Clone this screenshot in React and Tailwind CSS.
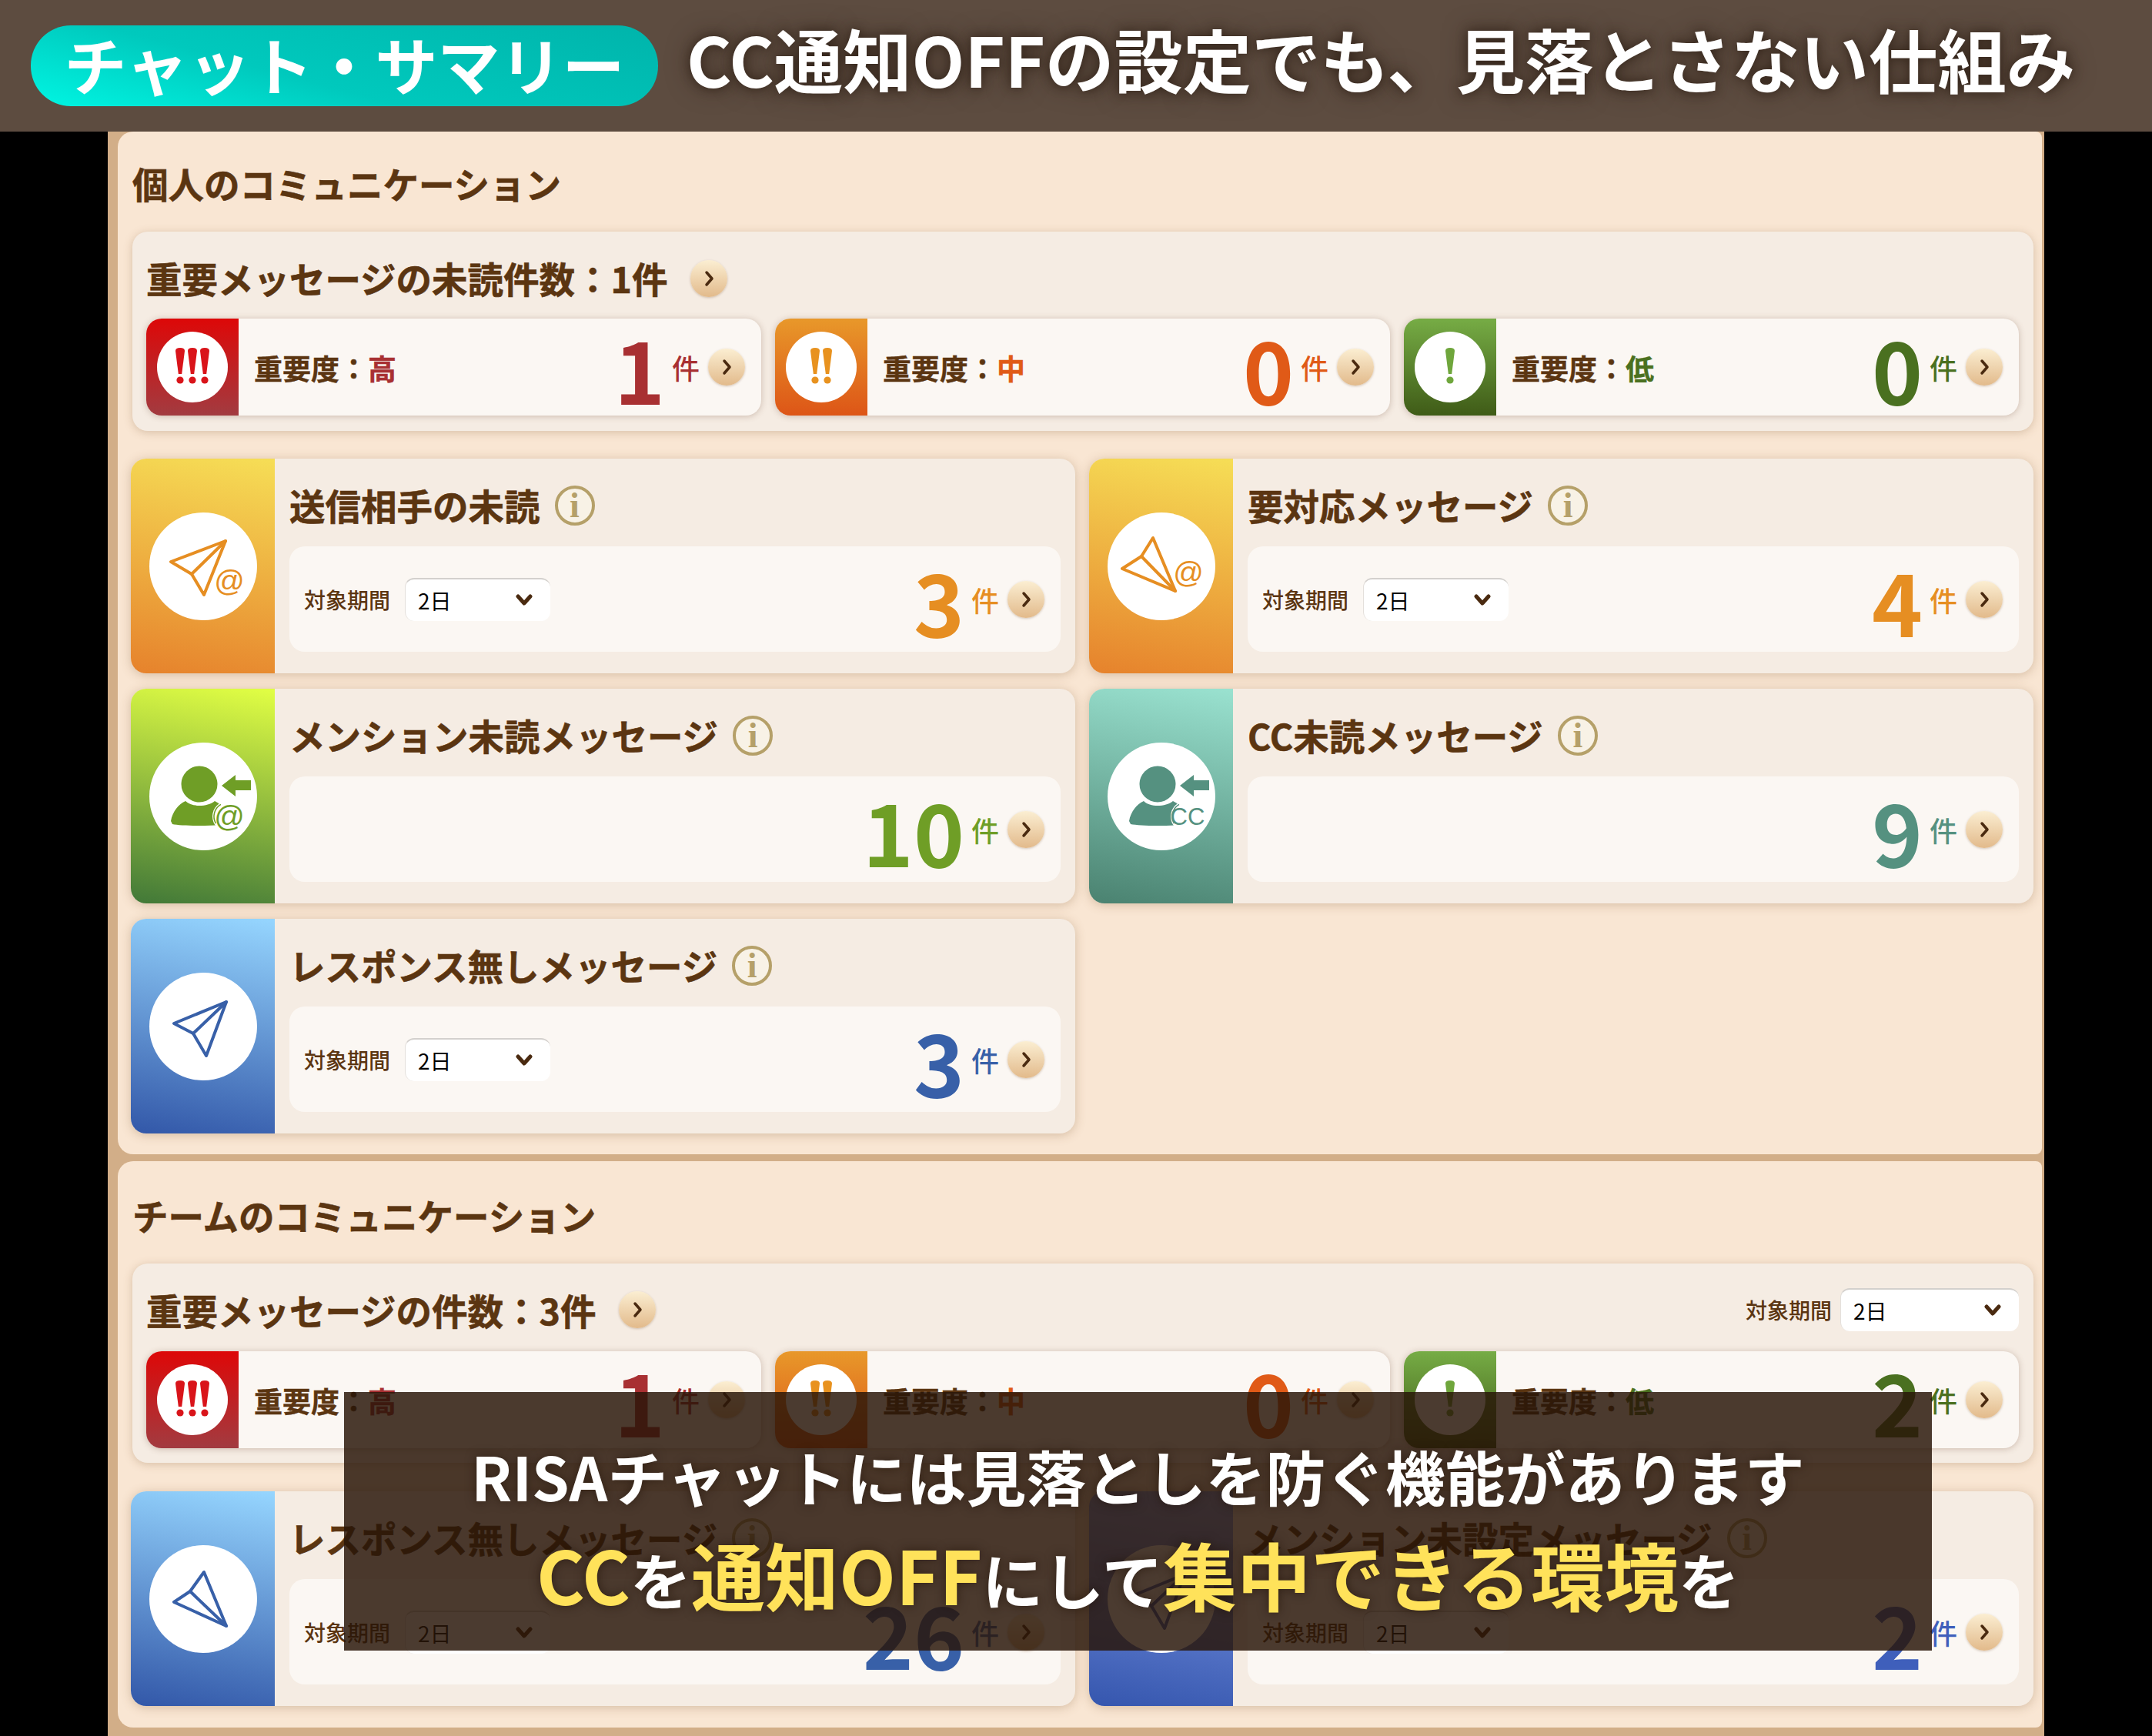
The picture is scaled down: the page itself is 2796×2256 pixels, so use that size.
const BROWN = 'text-[#5b3511]';

function ArrowButton() {
    return (
        <span className="flex h-[48px] w-[48px] shrink-0 items-center justify-center rounded-full bg-[linear-gradient(180deg,#fbeed2,#e2ba8b)] shadow-[0_1px_3px_rgba(120,80,40,0.3)]">
            <svg width="14" height="24" viewBox="0 0 14 24" fill="none" stroke="#4a2a10" strokeWidth="3.5" strokeLinecap="round" strokeLinejoin="round">
                <path d="M4 4l7 8-7 8" />
            </svg>
        </span>
    );
}

function InfoIcon() {
    return (
        <span className="ml-[19px] flex h-[52px] w-[52px] shrink-0 items-center justify-center rounded-full border-[4px] border-[#b5a069] bg-[#f8f2e6] font-['Liberation_Serif',serif] text-[46px] leading-none font-bold text-[#b5a069]">
            i
        </span>
    );
}

function Period({ className = 'w-[189px] ml-[19px]' }) {
    return (
        <div className="flex items-center">
            <span className={`text-[28px] leading-none font-medium ${BROWN}`}>対象期間</span>
            <div className={`flex h-[56px] items-center justify-between rounded-[12px] border-t-2 border-l border-t-[#d3d0cd] border-l-[#e4e0dc] bg-white pr-[22px] pl-[16px] ${className}`}>
                <span className="text-[28px] leading-none text-black">2日</span>
                <svg width="24" height="16" viewBox="0 0 24 16" fill="none" stroke="#4a2a10" strokeWidth="5" strokeLinecap="round" strokeLinejoin="round">
                    <path d="M4 3l8 9 8-9" />
                </svg>
            </div>
        </div>
    );
}

function Marks({ count, color }) {
    const start = 46 - ((count - 1) * 16) / 2;
    return (
        <svg width="92" height="92" viewBox="0 0 92 92">
            {Array.from({ length: count }).map((_, i) => (
                <g key={i} transform={`translate(${start + i * 16} 22)`} fill={color}>
                    <path d="M-6 3Q-6-1 0-1Q6-1 6 3L2.2 33H-2.2Z" />
                    <circle cx="0" cy="41" r="4.6" />
                </g>
            ))}
        </svg>
    );
}

function Plane({ pts, color, at }) {
    const { tip, a, inner, b } = pts;
    return (
        <svg width="140" height="140" viewBox="0 0 140 140" fill="none" stroke={color} strokeWidth="4" strokeLinejoin="round" strokeLinecap="round">
            <path d={`M${tip}L${a}L${inner}L${b}Z`} />
            <path d={`M${inner}L${tip}`} />
            {at && (
                <text x={at[0]} y={at[1]} textAnchor="middle" fontSize="39" fontFamily="Liberation Sans, sans-serif" fill={color} stroke="none">
                    @
                </text>
            )}
        </svg>
    );
}

function Person({ color, badge }) {
    return (
        <svg width="140" height="140" viewBox="0 0 140 140">
            <circle cx="65" cy="54" r="23.5" fill={color} />
            <path d="M28 102C30 90 38 80 47 76C55 84 75 84 85 76L92 80V107C70 109 40 108 30 106Z" fill={color} />
            <path d="M94 56L112 42V49H132V62H112V70Z" fill={color} />
            <circle cx="102" cy="96" r="20" fill="white" />
            <circle cx="102" cy="96" r="18" fill="none" stroke={color} strokeWidth="1.5" strokeDasharray="28 100" transform="rotate(150 102 96)" />
            <text
                x="104"
                y={badge === '@' ? 109 : 107}
                textAnchor="middle"
                fontSize={badge === '@' ? 39 : 31}
                fontFamily="Liberation Sans, sans-serif"
                fill={color}
            >
                {badge}
            </text>
        </svg>
    );
}

const PLANE_UP = { tip: '99 37', a: '28 64', inner: '55 80', b: '71 107' };
const PLANE_UP_BLUE = { tip: '100 38', a: '32 66', inner: '57 79', b: '74 108' };
const PLANE_DOWN = { tip: '88 102', a: '59 33', inner: '44 57', b: '19 73' };
const PLANE_DOWN_BLUE = { tip: '100 105', a: '71 35', inner: '53 60', b: '32 74' };

const LEVELS = [
    { name: '高', marks: 3, grad: 'bg-[linear-gradient(180deg,#dd0808,#a23b40)]', mark: '#d9141a', text: 'text-[#a83032]' },
    { name: '中', marks: 2, grad: 'bg-[linear-gradient(180deg,#e8982a,#dd5517)]', mark: '#e8921f', text: 'text-[#e05a17]' },
    { name: '低', marks: 1, grad: 'bg-[linear-gradient(180deg,#76ac45,#3f5b17)]', mark: '#6fa63c', text: 'text-[#4a7020]' },
];

const THEMES = {
    orange: { grad: 'bg-[linear-gradient(190deg,#f6de56,#e6822c)]', text: 'text-[#e68e22]', color: '#e68e22' },
    green: { grad: 'bg-[linear-gradient(190deg,#e2ff44,#417838)]', text: 'text-[#6f9e26]', color: '#6f9e26' },
    teal: { grad: 'bg-[linear-gradient(190deg,#9ae2d0,#4a8270)]', text: 'text-[#559180]', color: '#559180' },
    sky: { grad: 'bg-[linear-gradient(190deg,#96d6ff,#3257a8)]', text: 'text-[#3860a8]', color: '#3860a8' },
    indigo: { grad: 'bg-[linear-gradient(190deg,#8da6f0,#3556ae)]', text: 'text-[#3f5fbb]', color: '#3f5fbb' },
};

function Count({ value, color }) {
    return (
        <div className="flex items-center">
            <span className={`text-[112px] leading-none font-bold ${color}`}>{value}</span>
            <span className={`ml-[9px] text-[36px] leading-none font-medium ${color}`}>件</span>
            <span className="ml-[11px]">
                <ArrowButton />
            </span>
        </div>
    );
}

function LevelCard({ level, value }) {
    return (
        <div className="flex h-[126px] overflow-hidden rounded-[20px] bg-[#fbf7f3] shadow-[0_1px_8px_rgba(110,70,50,0.3)]">
            <div className={`flex w-[120px] shrink-0 items-center justify-center ${level.grad}`}>
                <span className="flex h-[92px] w-[92px] items-center justify-center rounded-full bg-white">
                    <Marks count={level.marks} color={level.mark} />
                </span>
            </div>
            <div className="flex flex-1 items-center justify-between pr-[21px] pl-[20px]">
                <span className={`pt-[3px] text-[37px] leading-none font-bold [-webkit-text-stroke:0.4px] ${BROWN}`}>
                    重要度：<span className={level.text}>{level.name}</span>
                </span>
                <Count value={value} color={level.text} />
            </div>
        </div>
    );
}

function Summary({ title, counts, period, head = 'h-[113px] pt-[8px]' }) {
    return (
        <div className="ml-[2px] h-[259px] rounded-[20px] bg-[#f5ece3] pr-[19px] pl-[18px] shadow-[0_2px_12px_rgba(130,90,50,0.28)]">
            <div className={`flex items-center justify-between ${head}`}>
                <div className="flex items-center">
                    <h3 className={`text-[46.5px] leading-none font-bold [-webkit-text-stroke:0.6px] ${BROWN}`}>{title}</h3>
                    <span className="ml-[29px]">
                        <ArrowButton />
                    </span>
                </div>
                {period && <Period className="ml-[11px] w-[232px]" />}
            </div>
            <div className="grid grid-cols-3 gap-x-[18px]">
                {LEVELS.map((level, i) => (
                    <LevelCard key={level.name} level={level} value={counts[i]} />
                ))}
            </div>
        </div>
    );
}

function BigCard({ title, theme, value, period, icon }) {
    const t = THEMES[theme];
    return (
        <div className="flex h-[279px] overflow-hidden rounded-[20px] bg-[#f5ece3] shadow-[0_2px_14px_rgba(130,90,50,0.3)]">
            <div className={`flex w-[187px] shrink-0 items-center justify-center ${t.grad}`}>
                <span className="flex h-[140px] w-[140px] items-center justify-center rounded-full bg-white">{icon(t.color)}</span>
            </div>
            <div className="flex-1 pr-[19px] pl-[19px]">
                <div className="flex h-[114px] items-center pt-[7px]">
                    <h3 className={`text-[46.5px] leading-none font-bold [-webkit-text-stroke:0.6px] ${BROWN}`}>{title}</h3>
                    <InfoIcon />
                </div>
                <div className="flex h-[137px] items-center justify-between rounded-[20px] bg-[#fbf7f3] pr-[21px] pl-[19px]">
                    <div>{period && <Period />}</div>
                    <Count value={value} color={t.text} />
                </div>
            </div>
        </div>
    );
}

function SectionTitle({ children, className }) {
    return <h2 className={`flex items-center text-[46.5px] leading-none font-bold [-webkit-text-stroke:0.6px] ${BROWN} ${className}`}>{children}</h2>;
}

export default function App() {
    return (
        <div className="relative h-[2256px] w-[2796px] overflow-hidden bg-black font-['Noto_Sans_CJK_JP','Noto_Sans',sans-serif]">
            <header className="flex h-[171px] items-center bg-[#5d4c40] pl-[40px]">
                <div className="flex h-[105px] w-[815px] items-center justify-center rounded-[52px] bg-[linear-gradient(195deg,#00b4ab,#00c9bd_60%,#00f0de_95%)] pb-[8px]">
                    <span className="text-[81px] leading-none font-bold text-white">チャット・サマリー</span>
                </div>
                <h1 className="ml-[37px] -translate-y-[10px] text-[89.4px] leading-none font-bold whitespace-nowrap text-white [text-shadow:0_0_14px_rgba(40,25,15,0.7),0_0_30px_rgba(40,25,15,0.5)]">
                    CC通知OFFの設定でも、見落とさない仕組み
                </h1>
            </header>

            <main className="ml-[140px] flex h-[2085px] w-[2516px] flex-col gap-[9px] bg-[#d2ae88] pr-[3px] pl-[13px]">
                <section className="h-[1329px] rounded-l-[20px] rounded-r-[8px] bg-[#f9e6d3] pr-[11px] pl-[17px]">
                    <SectionTitle className="ml-[2px] h-[130px] pt-[4px]">個人のコミュニケーション</SectionTitle>
                    <Summary title="重要メッセージの未読件数：1件" counts={[1, 0, 0]} />
                    <div className="mt-[36px] grid grid-cols-2 gap-x-[18px] gap-y-[20px]">
                        <BigCard title="送信相手の未読" theme="orange" value={3} period icon={(c) => <Plane pts={PLANE_UP} color={c} at={[104, 102]} />} />
                        <BigCard title="要対応メッセージ" theme="orange" value={4} period icon={(c) => <Plane pts={PLANE_DOWN} color={c} at={[105, 91]} />} />
                        <BigCard title="メンション未読メッセージ" theme="green" value={10} icon={(c) => <Person color={c} badge="@" />} />
                        <BigCard title="CC未読メッセージ" theme="teal" value={9} icon={(c) => <Person color={c} badge="CC" />} />
                        <BigCard title="レスポンス無しメッセージ" theme="sky" value={3} period icon={(c) => <Plane pts={PLANE_UP_BLUE} color={c} />} />
                    </div>
                </section>

                <section className="h-[736px] rounded-l-[20px] rounded-r-[8px] bg-[#f9e6d3] pr-[11px] pl-[17px]">
                    <SectionTitle className="ml-[2px] h-[133px] pt-[8px]">チームのコミュニケーション</SectionTitle>
                    <Summary title="重要メッセージの件数：3件" counts={[1, 0, 2]} period head="h-[114px] pt-[6px]" />
                    <div className="mt-[37px] grid grid-cols-2 gap-x-[18px]">
                        <BigCard title="レスポンス無しメッセージ" theme="sky" value={26} period icon={(c) => <Plane pts={PLANE_DOWN_BLUE} color={c} />} />
                        <BigCard title="メンション未設定メッセージ" theme="indigo" value={2} period icon={(c) => <Plane pts={PLANE_UP_BLUE} color={c} />} />
                    </div>
                </section>
            </main>

            <div className="absolute top-[1809px] left-[447px] flex h-[336px] w-[2063px] flex-col items-center bg-[rgba(40,21,8,0.84)] pt-[68px] font-bold whitespace-nowrap text-white [text-shadow:0_0_14px_rgba(30,15,5,0.6)]">
                <p className="text-[77.8px] leading-[80px]">RISAチャットには見落としを防ぐ機能があります</p>
                <p className="mt-[40px] text-[79px] leading-[96px]">
                    <span className="text-[96px] text-[#ffe25a]">CC</span>を<span className="text-[96px] text-[#ffe25a]">通知OFF</span>にして<span className="text-[96px] text-[#ffe25a]">集中できる環境</span>を
                </p>
            </div>
        </div>
    );
}
